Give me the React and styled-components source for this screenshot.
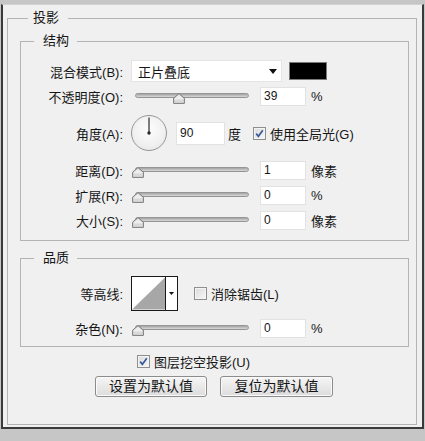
import React from 'react';
import styled, { createGlobalStyle } from 'styled-components';

const GlobalStyle = createGlobalStyle`
  html, body { margin: 0; padding: 0; }
  body {
    background: #c6c6c6;
    font-family: "Liberation Sans", "Noto Sans CJK SC", sans-serif;
    font-size: 13px;
    color: #161616;
  }
`;

const Window = styled.div`
  box-sizing: border-box;
  width: 423px;
  margin: 4px 0 0 1px;
  background: #f0f0f0;
  border: 2px solid #3a3a3a;
  border-top: 1px solid #d2d2d2;
  padding: 5px 5px 2px 4px;
`;

const Group = styled.fieldset`
  margin: ${p => p.$mt || 0}px 0 0 0;
  min-width: 0;
  border: 1px solid #b4b4b4;
  padding: ${p => p.$pad};
`;

const Legend = styled.legend`
  line-height: 16px;
  height: 16px;
  font-size: 13px;
  padding: ${p => p.$pad};
  margin-left: ${p => p.$ml}px;
`;

const Row = styled.div`
  display: flex;
  align-items: center;
  height: ${p => p.$h}px;
  margin-top: ${p => p.$mt || 0}px;
  padding-left: ${p => p.$pl || 0}px;
  gap: ${p => p.$gap || 0}px;
`;

const Label = styled.span`
  flex: 0 0 110px;
  box-sizing: border-box;
  padding-right: 8px;
  text-align: right;
  white-space: nowrap;
`;

const Select = styled.div`
  box-sizing: border-box;
  width: 151px;
  height: 22px;
  background: #fff;
  border: 1px solid #e4e4e4;
  display: flex;
  align-items: center;
  justify-content: space-between;
  padding: 0 4px 0 6px;
`;

const Swatch = styled.div`
  box-sizing: border-box;
  width: 38px;
  height: 18px;
  margin-left: 7px;
  background: #000;
  border: 1px solid #7a7a7a;
`;

const SliderBox = styled.div`
  position: relative;
  width: 122px;
  height: 20px;
`;

const Track = styled.div`
  box-sizing: border-box;
  margin: 7px 4px 0 4px;
  height: 5px;
  border: 1px solid #959595;
  border-radius: 3px;
  background: linear-gradient(#a4a4a4, #d8d8d8);
`;

const Thumb = styled.svg`
  position: absolute;
  top: 7px;
  width: 12px;
  height: 11px;
`;

const Field = styled.div`
  box-sizing: border-box;
  width: ${p => p.$w || 46}px;
  height: ${p => p.$h || 19}px;
  margin-left: ${p => p.$ml ?? 7}px;
  background: #fff;
  border: 1px solid #e2e2e2;
  font-size: 12px;
  display: flex;
  align-items: center;
  padding-left: 3px;
`;

const Unit = styled.span`
  margin-left: ${p => p.$ml ?? 5}px;
  white-space: nowrap;
`;

const Dial = styled.div`
  box-sizing: border-box;
  width: 36px;
  height: 36px;
  border-radius: 50%;
  border: 1px solid #959595;
  background: radial-gradient(circle at 50% 40%, #fdfdfd 0%, #f0f0f0 60%, #dedede 100%);
  display: flex;
`;

const CheckBox = styled.span`
  box-sizing: border-box;
  flex: 0 0 13px;
  width: 13px;
  height: 13px;
  margin-left: ${p => p.$ml || 0}px;
  border: 1px solid #8e8f8f;
  background: linear-gradient(135deg, #dadada, #f8f8f8);
  box-shadow: inset 0 0 0 1px #f4f4f4;
  display: flex;
`;

const CheckText = styled.span`
  margin-left: 4px;
  white-space: nowrap;
`;

const ContourPicker = styled.div`
  box-sizing: border-box;
  display: flex;
  width: 47px;
  height: 35px;
  border: 1px solid #1a1a1a;
  background: #fff;
`;

const ContourArrow = styled.div`
  flex: 0 0 11px;
  border-left: 1px solid #1a1a1a;
  display: flex;
  align-items: center;
  justify-content: center;
`;

const Button = styled.button`
  box-sizing: border-box;
  width: ${p => p.$w}px;
  height: 21px;
  padding: 0;
  margin: 0;
  font-family: inherit;
  font-size: 14px;
  line-height: 19px;
  color: #141414;
  border: 1px solid #8c8c8c;
  border-radius: 3px;
  background: linear-gradient(#f6f6f6, #e9e9e9 50%, #dcdcdc);
  box-shadow: inset 0 0 0 1px #fafafa;
`;

const Slider = ({ pct }) => (
  <SliderBox>
    <Track />
    <Thumb viewBox="0 0 12 11" style={{ left: 1 + pct * 105 }}>
      <path d="M6 0.6 L11.4 5.2 L11.4 10.4 L0.6 10.4 L0.6 5.2 Z" fill="#d9d9d9" stroke="#7b7b7b" strokeWidth="1" strokeLinejoin="round" />
      <path d="M6 2 L10.2 5.6 L10.2 6.4 L1.8 6.4 L1.8 5.6 Z" fill="#eeeeee" />
    </Thumb>
  </SliderBox>
);

const Check = ({ checked, ml }) => (
  <CheckBox $ml={ml}>
    {checked && (
      <svg width="11" height="11" viewBox="0 0 11 11">
        <path d="M2.2 5.6 L4.4 8.3 L8.8 2.2" fill="none" stroke="#3b5a9c" strokeWidth="1.7" />
      </svg>
    )}
  </CheckBox>
);

const SliderRow = ({ label, pct, value, unit, mt }) => (
  <Row $h={20} $mt={mt}>
    <Label>{label}</Label>
    <Slider pct={pct} />
    <Field>{value}</Field>
    <Unit>{unit}</Unit>
  </Row>
);

export default function App() {
  return (
    <>
      <GlobalStyle />
      <Window>
        <Group $pad="7px 7px 27px 12px">
          <Legend $pad="0 9px 0 5px" $ml={8}>投影</Legend>
          <Group $pad="11px 0 10px 0">
            <Legend $pad="0 8px 0 9px" $ml={13}>结构</Legend>
            <Row $h={22}>
              <Label>混合模式(B):</Label>
              <Select>
                <span>正片叠底</span>
                <svg width="8" height="5" viewBox="0 0 8 5">
                  <polygon points="0,0 8,0 4,5" fill="#111" />
                </svg>
              </Select>
              <Swatch />
            </Row>
            <SliderRow label="不透明度(O):" pct={0.39} value="39" unit="%" mt={4} />
            <Row $h={36} $mt={9}>
              <Label>角度(A):</Label>
              <Dial>
                <svg width="34" height="34" viewBox="0 0 34 34">
                  <line x1="17" y1="17" x2="17" y2="1.5" stroke="#3a3a3a" strokeWidth="1.3" />
                  <circle cx="17" cy="17" r="1.7" fill="#2a2a2a" />
                </svg>
              </Dial>
              <Field $w={49} $h={23} $ml={9}>90</Field>
              <Unit $ml={3}>度</Unit>
              <Check checked ml={12} />
              <CheckText>使用全局光(G)</CheckText>
            </Row>
            <SliderRow label="距离(D):" pct={0} value="1" unit="像素" mt={9} />
            <SliderRow label="扩展(R):" pct={0} value="0" unit="%" mt={5} />
            <SliderRow label="大小(S):" pct={0} value="0" unit="像素" mt={5} />
          </Group>
          <Group $mt={9} $pad="10px 0 8px 0">
            <Legend $pad="0 8px 0 9px" $ml={13}>品质</Legend>
            <Row $h={35}>
              <Label>等高线:</Label>
              <ContourPicker>
                <svg width="34" height="33" viewBox="0 0 34 33">
                  <polygon points="0,33 34,0 34,33" fill="#a7a7a7" />
                </svg>
                <ContourArrow>
                  <svg width="5" height="3" viewBox="0 0 5 3">
                    <polygon points="0,0 5,0 2.5,3" fill="#111" />
                  </svg>
                </ContourArrow>
              </ContourPicker>
              <Check ml={16} />
              <CheckText>消除锯齿(L)</CheckText>
            </Row>
            <SliderRow label="杂色(N):" pct={0} value="0" unit="%" mt={7} />
          </Group>
          <Row $h={16} $mt={6} $pl={117}>
            <Check checked />
            <CheckText>图层挖空投影(U)</CheckText>
          </Row>
          <Row $h={21} $mt={7} $pl={75} $gap={13}>
            <Button $w={112}>设置为默认值</Button>
            <Button $w={113}>复位为默认值</Button>
          </Row>
        </Group>
      </Window>
    </>
  );
}
